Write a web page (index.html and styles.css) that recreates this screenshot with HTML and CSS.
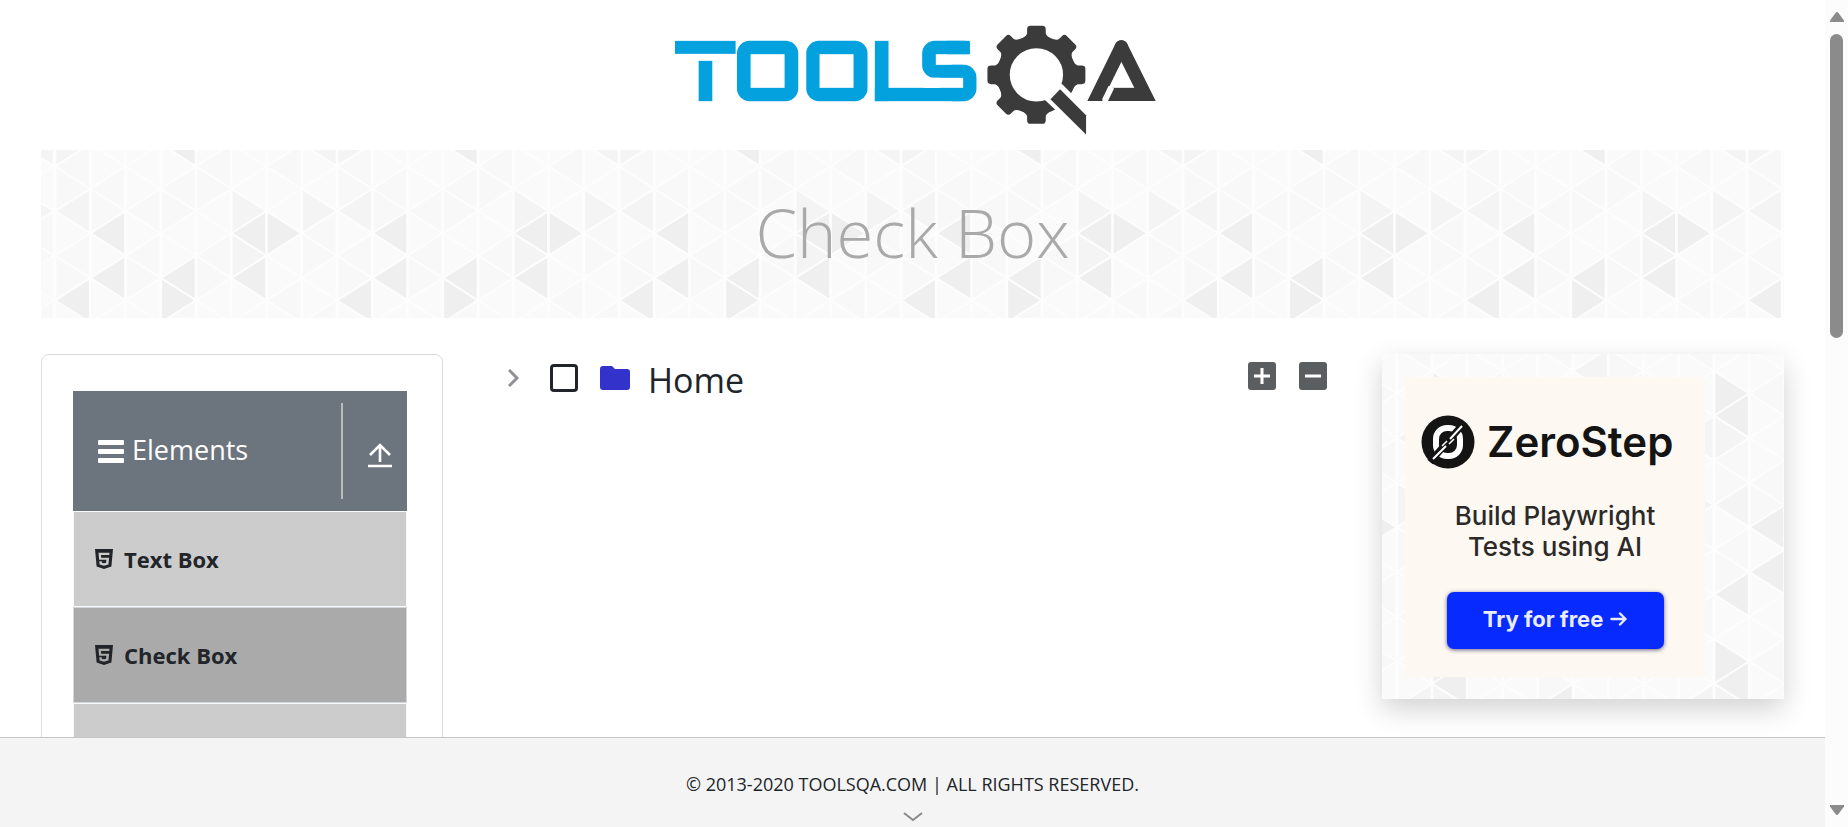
FILE: index.html
```html
<!DOCTYPE html>
<html lang="en">
<head>
<meta charset="utf-8">
<title>Check Box</title>
<link rel="stylesheet" href="styles.css">
</head>
<body>
<svg class="defs" aria-hidden="true">
  <defs>
    <!-- Triangle mesh: one unit is a column wide and half a triangle tall -->
    <g id="mesh">
      <rect width="8" height="12" fill="#fafafa"/>
      <g fill="#f8f8f8">
        <path d="M0 1l1-1v2zM0 5l1-1v2zM1 2l1-1v2zM1 10l1-1v2zM2 3l1-1v2zM2 5l1-1v2zM3 2l1-1v2zM4 5l1-1v2zM4 1l1-1v2zM5 10l1-1v2zM6 1l1-1v2zM6 7l1-1v2zM7 4l1-1v2zM3 8l1-1v2zM7 8l1-1v2z"/>
        <path d="M0 1v2l1-1zM0 5v2l1-1zM1 2v2l1-1zM2 5v2l1-1zM3 2v2l1-1zM4 1v2l1-1zM4 5v2l1-1zM5 8v2l1-1zM6 9v2l1-1zM7 4v2l1-1zM3 10v2l1-1z"/>
      </g>
      <g fill="#f4f4f4">
        <path d="M0 3l1-1v2zM7 0l1-1v2zM7 12l1-1v2zM4 9l1-1v2z"/>
        <path d="M0 -1v2l1-1zM0 11v2l1-1zM5 2v2l1-1zM5 4v2l1-1zM7 2v2l1-1z"/>
      </g>
      <g fill="#efefef">
        <path d="M0 7l1-1v2zM0 11l1-1v2zM1 4l1-1v2zM1 6l1-1v2zM3 0l1-1v2zM3 12l1-1v2zM3 6l1-1v2zM5 4l1-1v2zM5 6l1-1v2z"/>
        <path d="M3 6v2l1-1zM6 3v2l1-1zM0 9v2l1-1z"/>
      </g>
      <g stroke="#fdfdfd" stroke-width=".08" fill="none">
        <path d="M0 0v12M1 0v12M2 0v12M3 0v12M4 0v12M5 0v12M6 0v12M7 0v12M8 0v12"/>
        <path d="M0 1L1 0M0 3L3 0M0 5L5 0M0 7L7 0M0 9L8 1M0 11L8 3M1 12L8 5M3 12L8 7M5 12L8 9M7 12L8 11M0 11L1 12M0 9L3 12M0 7L5 12M0 5L7 12M0 3L8 11M0 1L8 9M1 0L8 7M3 0L8 5M5 0L8 3M7 0L8 1"/>
      </g>
    </g>
    <pattern id="mesh-hero" width="8" height="12" patternUnits="userSpaceOnUse" patternTransform="translate(14 -6) scale(35.25 22.33)"><use href="#mesh"/></pattern>
    <pattern id="mesh-ad" width="8" height="12" patternUnits="userSpaceOnUse" patternTransform="translate(50 84) scale(35.25 22.33)"><use href="#mesh"/></pattern>
    <symbol id="html5" viewBox="0 0 18 20">
      <path fill="currentColor" fill-rule="evenodd" d="M0 0h18l-1.600 17.600L9 20l-7.400-2.400zM3.500 3.800l.6 7h7.300l-.3 2.900-2.100.6-2.200-.6-.1-1.500H4.300l.3 3.200L9 16.700l4.400-1.300.7-6.700H6.200L6 6h8.300l.2-2.200z"/>
    </symbol>
  </defs>
</svg>

<div class="page">
  <div class="view">
    <header class="top">
      <a href="#" aria-label="TOOLSQA">
        <svg class="logo" viewBox="25 40 1465 335" aria-hidden="true">
          <g fill="#04a1df">
            <rect x="43" y="90" width="182" height="39"/>
            <rect x="114" y="150" width="41" height="121"/>
            <rect x="229" y="90" width="184" height="181" rx="38"/>
            <rect x="437" y="90" width="184" height="181" rx="38"/>
            <rect x="785" y="90" width="163" height="111" rx="38"/>
            <rect x="643" y="90" width="41" height="181"/>
          </g>
          <g fill="#fff">
            <rect x="270" y="130" width="102" height="101"/>
            <rect x="477" y="130" width="102" height="101"/>
            <rect x="826" y="130" width="130" height="32"/>
            <rect x="928" y="85" width="30" height="80"/>
            <rect x="908" y="160" width="50" height="45"/>
          </g>
          <g fill="#04a1df">
            <rect x="860" y="90" width="68" height="40"/>
            <rect x="840" y="162" width="108" height="109" rx="38"/>
            <rect x="643" y="231" width="260" height="40"/>
          </g>
          <rect x="790" y="201" width="118" height="30" fill="#fff"/>
          <g transform="translate(1128 192)" fill="#3b3b3b">
            <circle r="99" fill="none" stroke="#3b3b3b" stroke-width="38"/>
            <path id="tooth" d="M-46-108Q-30-116-28-124V-136Q-28-147-18-147H18Q28-147 28-136V-124Q30-116 46-108z"/>
            <use href="#tooth" transform="rotate(45)"/>
            <use href="#tooth" transform="rotate(90)"/>
            <use href="#tooth" transform="rotate(180)"/>
            <use href="#tooth" transform="rotate(225)"/>
            <use href="#tooth" transform="rotate(270)"/>
            <use href="#tooth" transform="rotate(315)"/>
          </g>
          <path fill="#fff" d="M1204 219l36 36 60 60v70h-30l-86-89-32-30z"/>
          <path fill="#3b3b3b" d="M1199 235l78 78v58l-107-106z"/>
          <svg x="1270" y="80" width="230" height="190.500" viewBox="1270 80 230 190.500">
            <g stroke="#3b3b3b" stroke-width="40" stroke-linecap="round">
              <line x1="1383" y1="108" x2="1296" y2="285"/>
              <line x1="1383" y1="108" x2="1471" y2="285"/>
            </g>
            <rect x="1340" y="231" width="110" height="40" fill="#3b3b3b"/>
            <line x1="1333" y1="270" x2="1353" y2="229" stroke="#fff" stroke-width="18"/>
          </svg>
        </svg>
      </a>
    </header>

    <div class="hero">
      <svg class="texture" aria-hidden="true"><rect width="100%" height="100%" fill="url(#mesh-hero)"/></svg>
      <h1>Check Box</h1>
    </div>

    <div class="columns">
      <nav class="sidebar">
        <button class="group" type="button">
          <svg class="bars" viewBox="0 0 26 24" aria-hidden="true"><g fill="#fff"><rect y="1" width="26" height="5" rx="1"/><rect y="10" width="26" height="5" rx="1"/><rect y="19" width="26" height="5" rx="1"/></g></svg>
          <span class="group-name">Elements</span>
          <span class="collapse">
            <svg class="up" viewBox="0 0 24 25" fill="none" stroke="#fff" stroke-width="2.600" aria-hidden="true"><path d="M12 19V2M2 12L12 2l10 10M0 23h24"/></svg>
          </span>
        </button>
        <ul class="menu">
          <li><a href="#"><svg class="tag" aria-hidden="true"><use href="#html5"/></svg>Text Box</a></li>
          <li class="active"><a href="#"><svg class="tag" aria-hidden="true"><use href="#html5"/></svg>Check Box</a></li>
          <li><a href="#"></a></li>
        </ul>
      </nav>

      <main class="tree">
        <div class="node">
          <button class="toggle" type="button" aria-label="Toggle">
            <svg viewBox="0 0 12 18" fill="none" stroke="#8f9194" stroke-width="3" aria-hidden="true"><path d="M1 1l8 8-8 8"/></svg>
          </button>
          <input class="tick" type="checkbox" id="home">
          <label class="node-label" for="home">
            <svg class="folder" viewBox="0 0 30 24" aria-hidden="true"><path fill="#3333cc" d="M3 0h9l3 3h12q3 0 3 3v15q0 3-3 3H3q-3 0-3-3V3q0-3 3-3z"/></svg>
            <span>Home</span>
          </label>
        </div>
        <div class="tools">
          <button type="button" aria-label="Expand all"><svg viewBox="0 0 28 28" aria-hidden="true"><rect width="28" height="28" rx="3" fill="#5b5e61"/><path d="M14 6v16M6 14h16" stroke="#fff" stroke-width="3"/></svg></button>
          <button type="button" aria-label="Collapse all"><svg viewBox="0 0 28 28" aria-hidden="true"><rect width="28" height="28" rx="3" fill="#5b5e61"/><path d="M6 14h16" stroke="#fff" stroke-width="3"/></svg></button>
        </div>
      </main>

      <aside class="ad">
        <svg class="texture" aria-hidden="true"><rect width="100%" height="100%" fill="url(#mesh-ad)"/></svg>
        <div class="banner">
          <div class="brand">
            <svg class="zero" viewBox="0 0 54 54" aria-hidden="true">
              <circle cx="27" cy="27" r="26.500" fill="#141414"/>
              <rect x="15" y="13" width="24" height="28" rx="11" fill="none" stroke="#fff" stroke-width="6"/>
              <path d="M9 47L43 8" stroke="#141414" stroke-width="7"/>
              <path d="M12 44L25 31M29 24L41 11" stroke="#fff" stroke-width="2"/>
              <path d="M21 31l5-5M28 29l5-5" stroke="#fff" stroke-width="1.500"/>
            </svg>
            <span>ZeroStep</span>
          </div>
          <p class="pitch">Build Playwright<br>Tests using AI</p>
          <a class="cta" href="#">Try for free
            <svg viewBox="0 0 17 14" fill="none" stroke="#e9edff" stroke-width="2.400" stroke-linecap="round" stroke-linejoin="round" aria-hidden="true"><path d="M1.500 7h14M10 1.500L15.500 7 10 12.500"/></svg>
          </a>
        </div>
      </aside>
    </div>
  </div>

  <footer class="foot">
    <span>© 2013-2020 TOOLSQA.COM | ALL RIGHTS RESERVED.</span>
    <svg class="more" viewBox="0 0 20 10" fill="none" stroke="#8a8a8a" stroke-width="2" aria-hidden="true"><path d="M1 1l9 7 9-7"/></svg>
  </footer>
</div>

<div class="scroll" aria-hidden="true">
  <svg viewBox="0 0 14 10"><path fill="#8b8b8b" d="M5.500 1Q7-1 8.500 1L14 8.500V10H0V8.500z"/></svg>
  <div class="track"><div class="thumb"></div></div>
  <svg viewBox="0 0 14 10"><path fill="#8b8b8b" d="M5.500 9Q7 11 8.500 9L14 1.500V0H0v1.500z"/></svg>
</div>
</body>
</html>
```
FILE: styles.css
```css
* { box-sizing: border-box; }

body {
  margin: 0;
  height: 100vh;
  display: flex;
  overflow: hidden;
  background: #fff;
  color: #212529;
  font-family: "Open Sans", "Noto Sans", sans-serif;
}

svg { display: block; }
a { color: inherit; text-decoration: none; }
button { padding: 0; border: 0; background: none; font: inherit; color: inherit; }

.defs { position: absolute; width: 0; height: 0; }

.page { flex: 1; min-width: 0; display: flex; flex-direction: column; }
.view { flex: 1; min-height: 0; overflow: hidden; padding: 0 41px; }

.top { display: flex; justify-content: center; padding: 24px 0 14px; }
.logo { width: 488px; height: 112px; }

.texture { position: absolute; inset: 0; width: 100%; height: 100%; z-index: -1; }

.hero { position: relative; isolation: isolate; padding: 34px 0 38px; text-align: center; }
.hero h1 { margin: 0; font-size: 67px; line-height: 96px; font-weight: 300; color: #a9a9a9; }

.columns {
  display: grid;
  grid-template-columns: repeat(4, minmax(0, 1fr));
  column-gap: 45px;
  align-items: start;
  margin-top: 36px;
}

.sidebar { border: 1px solid #dcdcdc; border-radius: 8px; padding: 36px 35px 36px 31px; }
.group {
  display: flex;
  align-items: center;
  gap: 8px;
  width: 100%;
  height: 120px;
  padding: 12px 15px 12px 25px;
  background: #6c757d;
  color: #fff;
  font-size: 27px;
  text-align: left;
}
.bars { width: 26px; height: 24px; }
.group-name { flex: 1; padding-bottom: 4px; }
.collapse {
  display: flex;
  align-items: center;
  align-self: stretch;
  padding: 8px 0 0 25px;
  border-left: 2px solid #b9bcb9;
}
.up { width: 24px; height: 25px; }

.menu { list-style: none; margin: 0; padding: 0; }
.menu li { border: 1px solid #f8f9fa; background: #ccc; }
.menu .active { background: #aaa; border-color: #d3d6da; }
.menu a {
  display: flex;
  align-items: center;
  gap: 11px;
  height: 94px;
  padding-left: 21px;
  font-size: 22px;
  font-weight: 700;
}
.tag { width: 18px; height: 20px; }

.tree { grid-column: span 2; display: flex; justify-content: space-between; align-items: start; padding: 0 10px 0 20px; }
.node { display: flex; align-items: center; }
.toggle svg { width: 12px; height: 18px; }
.tick {
  appearance: none;
  width: 28px;
  height: 28px;
  margin: 0 22px 0 30px;
  border: 3px solid #212529;
  border-radius: 4px;
}
.node-label { display: flex; align-items: center; gap: 18px; font-size: 34px; line-height: 44px; }
.node-label span { padding-top: 4px; }
.folder { width: 30px; height: 24px; }
.tools { display: flex; gap: 23px; padding-top: 8px; }
.tools svg { width: 28px; height: 28px; }

.ad { position: relative; isolation: isolate; padding: 23px 23px 22px; box-shadow: 0 10px 26px rgba(0, 0, 0, .18); }
.banner {
  display: flex;
  flex-direction: column;
  align-items: center;
  max-width: 300px;
  height: 300px;
  padding-top: 38px;
  background: #fef8f2;
  font-family: Inter, sans-serif;
}
.brand {
  display: flex;
  align-items: center;
  align-self: start;
  gap: 12px;
  padding-left: 16px;
  font-size: 42px;
  line-height: 54px;
  font-weight: 600;
  color: #141414;
}
.zero { width: 54px; height: 54px; }
.pitch { margin: 31px 0 0; text-align: center; font-size: 26px; line-height: 31px; font-weight: 500; color: #2c2a29; }
.cta {
  display: flex;
  align-items: center;
  justify-content: center;
  gap: 7px;
  width: 217px;
  height: 57px;
  margin-top: 30px;
  padding-bottom: 3px;
  border-radius: 7px;
  background: #072bff;
  box-shadow: 0 1px 4px rgba(0, 0, 60, .6);
  color: #e9edff;
  font-size: 22px;
  font-weight: 700;
}
.cta svg { width: 17px; height: 14px; }

.foot {
  display: flex;
  flex-direction: column;
  align-items: center;
  height: 90px;
  padding-top: 33px;
  border-top: 1px solid #c4c4c4;
  background: #f4f4f4;
  font-size: 18px;
  line-height: 26px;
}
.more { width: 20px; height: 10px; margin-top: 15px; }

.scroll {
  display: flex;
  flex-direction: column;
  align-items: center;
  justify-content: space-between;
  width: 23px;
  padding: 12px 0;
  background: #fcfcfc;
}
.scroll svg { width: 14px; height: 10px; }
.track { flex: 1; padding: 12px 0; }
.thumb { width: 13px; height: 40%; border-radius: 7px; background: #8b8b8b; }
```
